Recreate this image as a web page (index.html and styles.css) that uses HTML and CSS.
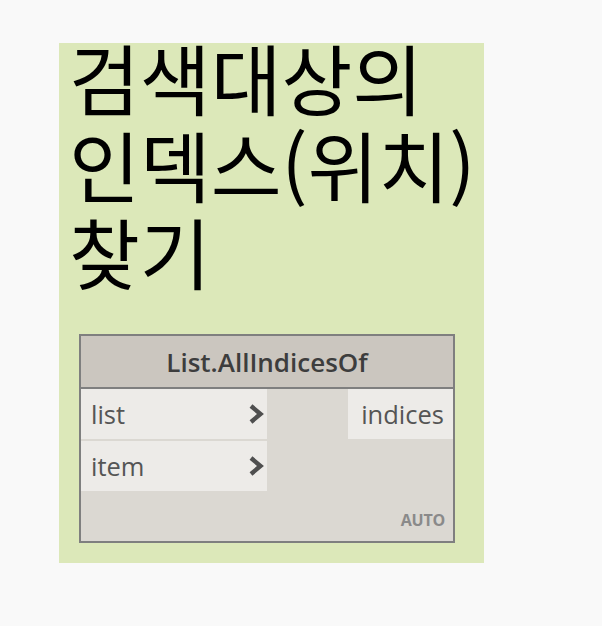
FILE: index.html
```html
<!DOCTYPE html>
<html lang="ko">
<head>
<meta charset="utf-8">
<link rel="stylesheet" href="styles.css">
</head>
<body>
<div class="panel">
  <div class="title">검색대상의 인덱스(위치) 찾기</div>
  <div class="node">
    <div class="node-header">List.AllIndicesOf</div>
    <div class="node-body">
      <div class="ports">
        <div class="inputs">
          <div class="port in"><span>list</span><svg class="chev" viewBox="0 0 16 20" width="16" height="20"><path d="M3 2 L12.5 10 L3 18" fill="none" stroke="#4f4f4f" stroke-width="4.4"/></svg></div>
          <div class="port in"><span>item</span><svg class="chev" viewBox="0 0 16 20" width="16" height="20"><path d="M3 2 L12.5 10 L3 18" fill="none" stroke="#4f4f4f" stroke-width="4.4"/></svg></div>
        </div>
        <div class="outputs">
          <div class="port out"><span>indices</span></div>
        </div>
      </div>
      <div class="auto">AUTO</div>
    </div>
  </div>
</div>
</body>
</html>
```
FILE: styles.css
```css
html, body {
  margin: 0;
  padding: 0;
  background: #f9f9f9;
}
body {
  padding: 43px 0 0 59px;
}
.panel {
  display: flow-root;
  width: 425px;
  height: 520px;
  box-sizing: border-box;
  background: #dce8b9;
  padding: 0 0 0 10px;
}
.title {
  font-family: "Noto Sans CJK KR", "Noto Sans", sans-serif;
  font-size: 77px;
  line-height: 87px;
  color: #000;
  margin-top: -10px;
  width: 414px;
}
.node {
  margin: 40px 0 0 10px;
  width: 376px;
  box-sizing: border-box;
  border: 2px solid #7f7f7f;
  background: #dbd8d2;
  font-family: "Open Sans", sans-serif;
}
.node-header {
  height: 51px;
  background: #cbc6bf;
  border-bottom: 2px solid #7f7f7f;
  display: flex;
  align-items: center;
  justify-content: center;
  font-weight: 600;
  font-size: 26px;
  color: #3d3d3d;
}
.node-body {
  height: 152px;
  display: flex;
  flex-direction: column;
}
.ports {
  display: flex;
  justify-content: space-between;
}
.inputs {
  width: 186px;
  display: flex;
  flex-direction: column;
  gap: 2px;
}
.outputs {
  width: 105px;
}
.port {
  height: 50px;
  background: #edebe8;
  display: flex;
  align-items: center;
  font-size: 25.5px;
  color: #555;
}
.port.in {
  justify-content: space-between;
  padding: 0 3px 0 10px;
}
.port.out {
  justify-content: flex-end;
  padding-right: 9px;
}
.chev {
  display: block;
}
.auto {
  margin-top: auto;
  align-self: flex-end;
  font-size: 16px;
  font-weight: 700;
  color: #8a8a8a;
  padding: 0 8px 10px 0;
  letter-spacing: -0.2px;
}
```
